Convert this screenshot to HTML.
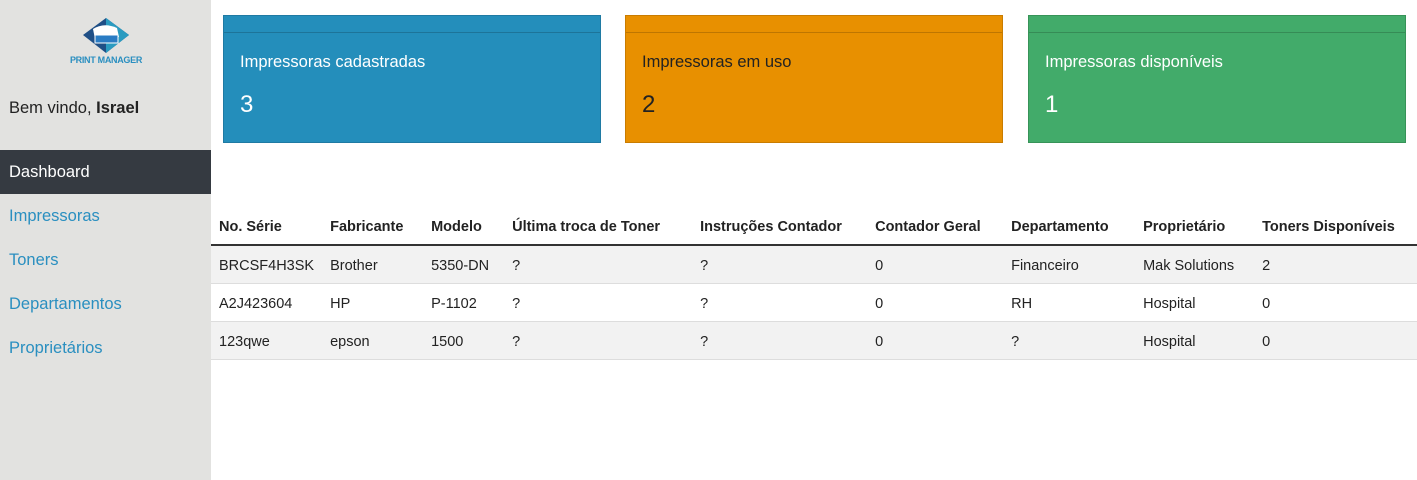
<!DOCTYPE html>
<html><head><meta charset="utf-8"><style>
*{margin:0;padding:0;box-sizing:border-box}
body{width:1417px;height:480px;overflow:hidden;font-family:"Liberation Sans",sans-serif;background:#fff;position:relative;color:#222}
.side{position:absolute;left:0;top:0;width:211px;height:480px;background:#e2e2e0}
.logo{position:absolute;left:66px;top:16px;width:80px;height:54px}
.welcome{position:absolute;left:9px;top:99px;font-size:16.5px;color:#222}
.nav{position:absolute;left:0;width:211px;height:44px;line-height:45px;padding-left:9px;font-size:16.5px;color:#2a8fc0}
.nav.active{background:#353a41;color:#fff}
.card{position:absolute;top:15px;width:378px;height:128px;border:1px solid}
.card .hd{height:17px;border-bottom:1px solid rgba(0,0,0,.18)}
.card .t{position:absolute;left:16px;top:37px;font-size:16.5px}
.card .n{position:absolute;left:16px;top:75px;font-size:24px}
table{position:absolute;left:211px;top:207px;width:1206px;border-collapse:collapse;font-size:14.5px}
th{text-align:left;font-weight:bold;height:38px;padding:2px 8px 0;border-bottom:2px solid #333;white-space:nowrap}
td{height:38px;padding:4px 8px 0;border-bottom:1px solid #ddd;white-space:nowrap}
tbody tr:nth-child(odd){background:#f2f2f2}
</style></head><body>
<div class="side">
<svg class="logo" viewBox="0 0 80 54">
<polygon points="40,2 63,19 40,37 17,19" fill="#1f4f86"/>
<polygon points="40,2 63,19 40,37" fill="#2a9bc0"/>
<path d="M27,13 Q38,6 51,12 L53,21 L29,23 Z" fill="#fff"/>
<rect x="29" y="19" width="23" height="8" fill="#2a7cc4" stroke="#fff" stroke-width="1"/>
<text x="40" y="47" text-anchor="middle" font-size="9" font-weight="bold" fill="#2a8fc0" font-family="Liberation Sans" letter-spacing="-0.3">PRINT MANAGER</text>
</svg>
<div class="welcome">Bem vindo, <b>Israel</b></div>
<div class="nav active" style="top:150px">Dashboard</div>
<div class="nav" style="top:194px">Impressoras</div>
<div class="nav" style="top:238px">Toners</div>
<div class="nav" style="top:282px">Departamentos</div>
<div class="nav" style="top:326px">Proprietários</div>
</div>
<div class="card" style="left:223px;background:#248ebb;border-color:#1f7aa3;color:#fff"><div class="hd"></div><div class="t">Impressoras cadastradas</div><div class="n">3</div></div>
<div class="card" style="left:625px;background:#e89000;border-color:#c97c00;color:#222"><div class="hd"></div><div class="t">Impressoras em uso</div><div class="n">2</div></div>
<div class="card" style="left:1028px;background:#42ab6a;border-color:#379358;color:#fff"><div class="hd"></div><div class="t">Impressoras disponíveis</div><div class="n">1</div></div>
<table>
<thead><tr><th style="width:111px">No. Série</th><th style="width:101px">Fabricante</th><th style="width:81px">Modelo</th><th style="width:188px">Última troca de Toner</th><th style="width:175px">Instruções Contador</th><th style="width:136px">Contador Geral</th><th style="width:132px">Departamento</th><th style="width:119px">Proprietário</th><th>Toners Disponíveis</th></tr></thead>
<tbody>
<tr><td>BRCSF4H3SK</td><td>Brother</td><td>5350-DN</td><td>?</td><td>?</td><td>0</td><td>Financeiro</td><td>Mak Solutions</td><td>2</td></tr>
<tr><td>A2J423604</td><td>HP</td><td>P-1102</td><td>?</td><td>?</td><td>0</td><td>RH</td><td>Hospital</td><td>0</td></tr>
<tr><td>123qwe</td><td>epson</td><td>1500</td><td>?</td><td>?</td><td>0</td><td>?</td><td>Hospital</td><td>0</td></tr>
</tbody></table>
</body></html>
